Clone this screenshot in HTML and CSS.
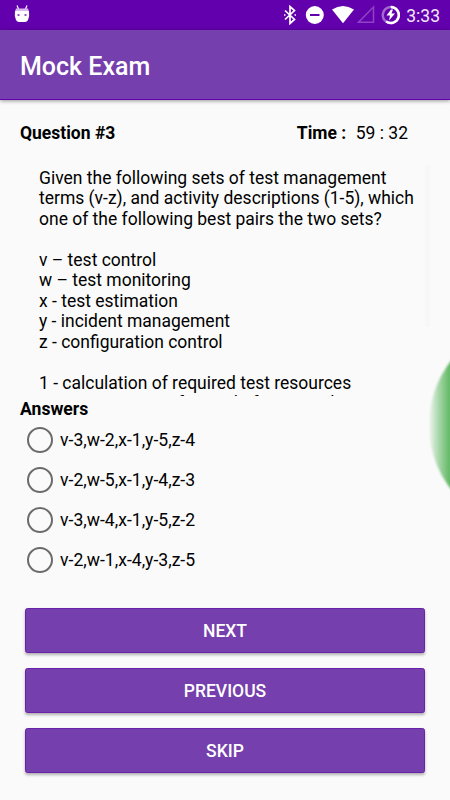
FILE: index.html
```html
<!DOCTYPE html>
<html lang="en">
<head>
    <meta charset="utf-8">
    <title>Mock Exam</title>
    <link rel="stylesheet" href="styles.css">
</head>
<body>
<div class="status-bar">
    <svg class="app-icon" width="16" height="18" viewBox="0 0 16 18">
        <path d="M3 0.5L4.5 4M13 0.5L11.5 4" stroke="#fff" stroke-width="1.2"/>
        <path d="M2 3.5h12l1 3H1z" fill="#d9b8ef"/>
        <path d="M1 6h14q.8 5-1 9q-1 2-3 2H5q-2 0-3-2Q.2 11 1 6z" fill="#fff"/>
        <path d="M3.5 9h2v2h-2zM10.5 9h2v2h-2z" fill="#9651c6"/>
    </svg>
    <svg class="status-icons" width="120" height="20" viewBox="0 0 120 20">
        <path d="M5 5.5l9.5 9-4.5 4v-17l4.500 4-9.500 9" fill="none" stroke="#fff" stroke-width="1.7"/>
        <path d="M4 10h1.500M14.500 10h1.500" stroke="#fff" stroke-width="1.500"/>
        <circle cx="34.800" cy="10" r="9" fill="#fff"/>
        <path d="M30 10h9.500" stroke="#6200ae" stroke-width="2"/>
        <path d="M52 4.500Q63 -2.500 74 4.500L63 18.300z" fill="#fff"/>
        <path d="M78.500 17.300L93.500 2v15.300z" fill="none" stroke="#8e44c4" stroke-width="1.500"/>
        <circle cx="110.700" cy="10" r="8" fill="none" stroke="#a568d0" stroke-width="2.500"/>
        <path d="M110.700 2a8 8 0 1 1-4.500 14.500" fill="none" stroke="#fff" stroke-width="2.500"/>
        <path d="M111 4.500l-4.500 6h3.500l-1 5 6-7h-3.500l1.500-4z" fill="#fff"/>
    </svg>
    <span class="clock">3:33</span>
</div>

<div class="app-bar">Mock Exam</div>

<div class="content">
    <div class="exam-info">
        <b>Question #3</b>
        <div class="timer"><b>Time :</b><span>59 : 32</span></div>
    </div>

    <div class="question">
        <div class="question-text">Given the following sets of test management
terms (v-z), and activity descriptions (1-5), which
one of the following best pairs the two sets?

v – test control
w – test monitoring
x - test estimation
y - incident management
z - configuration control

1 - calculation of required test resources
2 - maintenance of record of test results</div>
        <div class="scrollbar"></div>
    </div>

    <div class="answers-title">Answers</div>
    <form class="answers">
        <label><input type="radio" name="answer">v-3,w-2,x-1,y-5,z-4</label>
        <label><input type="radio" name="answer">v-2,w-5,x-1,y-4,z-3</label>
        <label><input type="radio" name="answer">v-3,w-4,x-1,y-5,z-2</label>
        <label><input type="radio" name="answer">v-2,w-1,x-4,y-3,z-5</label>
    </form>

    <div class="buttons">
        <button type="button">NEXT</button>
        <button type="button">PREVIOUS</button>
        <button type="button">SKIP</button>
    </div>
</div>

<div class="side-clip">
    <div class="side-bubble"></div>
</div>
</body>
</html>
```
FILE: styles.css
```css
body {
    position: relative;
    height: 800px;
    margin: 0;
    overflow: hidden;
    background-color: #fafafa;
    color: #000;
    font-family: Roboto, sans-serif;
    font-size: 17.5px;
}

.status-bar {
    display: flex;
    align-items: center;
    height: 30px;
    padding: 0 10px 0 14px;
    background-color: #6200ae;
    color: #f3e8fa;
}

.app-icon {
    margin-top: -2px;
}

.status-icons {
    margin-left: auto;
}

.clock {
    margin-top: 1px;
    margin-left: 6px;
    font-size: 17.5px;
}

.app-bar {
    height: 70px;
    box-sizing: border-box;
    padding-left: 20px;
    border-bottom: 1px solid #6200ae;
    background-color: #753fad;
    box-shadow: 0 1px 4px #00000066;
    color: #fff;
    font-size: 25px;
    font-weight: 500;
    line-height: 73px;
}

.exam-info {
    display: flex;
    justify-content: space-between;
    height: 65px;
    padding: 0 42px 0 20px;
    line-height: 66px;
}

.timer span {
    margin-left: 9.5px;
}

.question {
    display: flex;
    justify-content: space-between;
    height: 231px;
    padding: 0 20px 0 39px;
    overflow: hidden;
}

.question-text {
    padding-top: 3px;
    font-size: 17.49px;
    line-height: 20.45px;
    white-space: pre;
}

.scrollbar {
    width: 5px;
    height: 162px;
    background-color: #f7f7f7;
}

.answers-title {
    height: 24px;
    padding-left: 20px;
    font-size: 17.6px;
    font-weight: bold;
    line-height: 26px;
}

.answers label {
    display: flex;
    align-items: center;
    height: 40px;
    padding-left: 27px;
    font-size: 17.6px;
}

.answers input {
    appearance: none;
    box-sizing: border-box;
    width: 26px;
    height: 26px;
    margin: 0 7px 0 0;
    border: 2.5px solid #6b6b6b;
    border-radius: 50%;
}

.buttons {
    display: flex;
    flex-direction: column;
    gap: 15px;
    padding: 27.5px 25px 0;
}

button {
    height: 45px;
    padding: 2px 0 0;
    border: 1px solid #6a22ab;
    border-radius: 2.5px;
    background-color: #753fad;
    box-shadow: 0 2px 3px #0000004d;
    color: #fff;
    font-family: inherit;
    font-size: 17.5px;
    font-weight: 500;
}

.side-clip {
    position: absolute;
    top: 320px;
    right: 0;
    width: 21px;
    height: 210px;
    overflow: hidden;
}

.side-bubble {
    width: 210px;
    height: 210px;
    border-radius: 50%;
    background: linear-gradient(to right, #4caf500d, #4caf5066 8px, #4caf50d9 20px);
    filter: blur(0.8px);
}
```
